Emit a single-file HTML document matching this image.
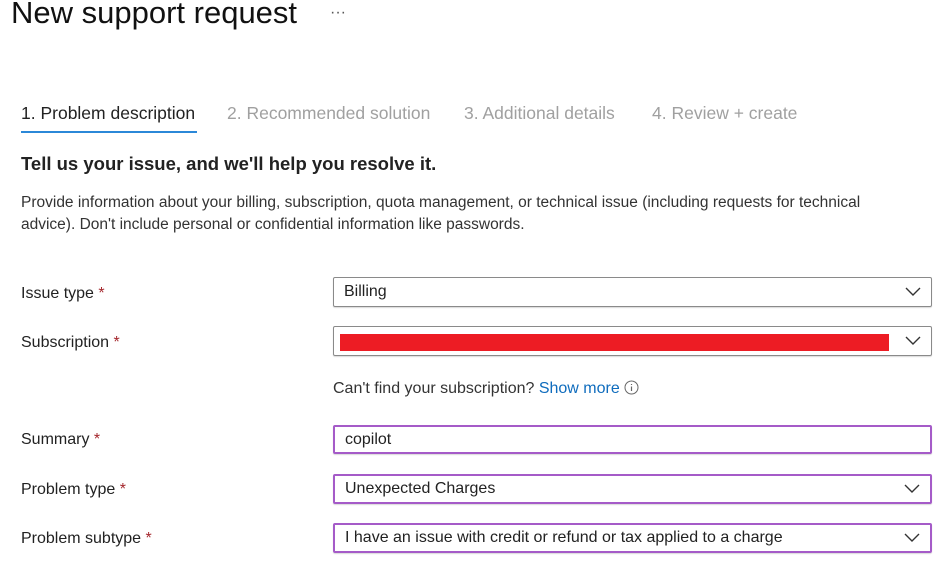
<!DOCTYPE html>
<html><head><style>
body{margin:0;width:948px;height:570px;background:#fff;font-family:"Liberation Sans",sans-serif;color:#222;position:relative;overflow:hidden}
.a{position:absolute;white-space:nowrap}
.box{position:absolute;left:333px;width:599px;border:1px solid #8a8a8a;border-radius:2px;box-shadow:0 1px 1px rgba(0,0,0,.15);font-size:16px;box-sizing:border-box}
.box span{position:absolute;left:10px;top:50%;transform:translateY(-50%)}
.chev{position:absolute;right:10px;top:50%;margin-top:-5px}
.lbl{position:absolute;left:21px;font-size:16px}
.lbl b{color:#a4262c;font-weight:normal}
</style></head><body>
<div class="a" style="left:11px;top:-5px;font-size:31px;color:#111">New support request</div>
<div class="a" style="left:330px;top:4px;font-size:16px;color:#555">···</div>
<div class="a" style="left:21px;top:103px;font-size:17.5px;color:#222">1. Problem description</div>
<div class="a" style="left:21px;top:131px;width:176px;height:2px;background:#2b88d8"></div>
<div class="a" style="left:227px;top:103px;font-size:17.5px;color:#a0a0a0">2. Recommended solution</div>
<div class="a" style="left:464px;top:103px;font-size:17.5px;color:#a0a0a0">3. Additional details</div>
<div class="a" style="left:652px;top:103px;font-size:17.5px;color:#a0a0a0">4. Review + create</div>
<div class="a" style="left:21px;top:153px;font-size:18.5px;font-weight:bold;color:#222">Tell us your issue, and we'll help you resolve it.</div>
<div class="a" style="left:21px;top:192px;font-size:15.5px;line-height:22px;color:#333;white-space:normal;width:900px">Provide information about your billing, subscription, quota management, or technical issue (including requests for technical<br>advice). Don't include personal or confidential information like passwords.</div>

<div class="lbl" style="top:285px">Issue type <b>*</b></div>
<div class="box" style="top:277px;height:30px"><span>Billing</span><svg class="chev" width="16" height="10"><path d="M1 1l7 7 7-7" fill="none" stroke="#333" stroke-width="1.4"/></svg></div>

<div class="lbl" style="top:334px">Subscription <b>*</b></div>
<div class="box" style="top:326px;height:30px"><div style="position:absolute;left:6px;top:7px;width:549px;height:17px;background:#ed1c24"></div><svg class="chev" width="16" height="10"><path d="M1 1l7 7 7-7" fill="none" stroke="#333" stroke-width="1.4"/></svg></div>

<div class="a" style="left:333px;top:380px;font-size:16px;color:#333">Can't find your subscription? <span style="color:#0f6cbd">Show more</span> <svg width="15" height="15" style="vertical-align:-2px"><circle cx="7.5" cy="7.5" r="6.5" fill="none" stroke="#666"/><path d="M7.5 6.5v4.5M7.5 4v1" stroke="#666" stroke-width="1.2"/></svg></div>

<div class="lbl" style="top:431px">Summary <b>*</b></div>
<div class="box" style="top:425px;height:29px;border:2px solid #a55bc8"><span>copilot</span></div>

<div class="lbl" style="top:481px">Problem type <b>*</b></div>
<div class="box" style="top:474px;height:30px;border:2px solid #a55bc8"><span>Unexpected Charges</span><svg class="chev" width="16" height="10"><path d="M1 1l7 7 7-7" fill="none" stroke="#333" stroke-width="1.4"/></svg></div>

<div class="lbl" style="top:530px">Problem subtype <b>*</b></div>
<div class="box" style="top:523px;height:30px;border:2px solid #a55bc8"><span>I have an issue with credit or refund or tax applied to a charge</span><svg class="chev" width="16" height="10"><path d="M1 1l7 7 7-7" fill="none" stroke="#333" stroke-width="1.4"/></svg></div>
</body></html>
